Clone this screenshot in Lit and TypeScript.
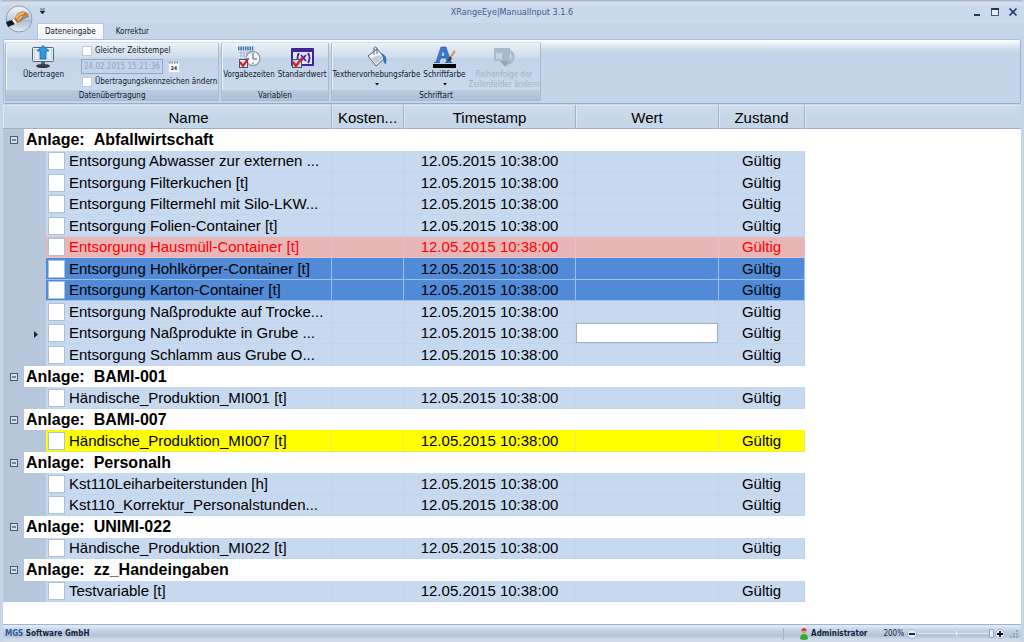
import { LitElement, html, css, nothing } from "lit";
import { customElement, state } from "lit/decorators.js";
import { classMap } from "lit/directives/class-map.js";

interface Item {
  name: string;
  tone?: "error" | "selected" | "marked";
  current?: boolean;
}
interface Group {
  title: string;
  items: Item[];
}

const STAMP = "12.05.2015 10:38:00";

const GROUPS: Group[] = [
  {
    title: "Abfallwirtschaft",
    items: [
      { name: "Entsorgung Abwasser zur externen ..." },
      { name: "Entsorgung Filterkuchen [t]" },
      { name: "Entsorgung Filtermehl mit Silo-LKW..." },
      { name: "Entsorgung Folien-Container [t]" },
      { name: "Entsorgung Hausmüll-Container [t]", tone: "error" },
      { name: "Entsorgung Hohlkörper-Container [t]", tone: "selected" },
      { name: "Entsorgung Karton-Container [t]", tone: "selected" },
      { name: "Entsorgung Naßprodukte auf Trocke..." },
      { name: "Entsorgung Naßprodukte in Grube ...", current: true },
      { name: "Entsorgung Schlamm aus Grube O..." },
    ],
  },
  { title: "BAMI-001", items: [{ name: "Händische_Produktion_MI001 [t]" }] },
  { title: "BAMI-007", items: [{ name: "Händische_Produktion_MI007 [t]", tone: "marked" }] },
  {
    title: "Personalh",
    items: [{ name: "Kst110Leiharbeiterstunden [h]" }, { name: "Kst110_Korrektur_Personalstunden..." }],
  },
  { title: "UNIMI-022", items: [{ name: "Händische_Produktion_MI022 [t]" }] },
  { title: "zz_Handeingaben", items: [{ name: "Testvariable [t]" }] },
];

const baseStyles = css`
  * {
    box-sizing: border-box;
  }
  button {
    margin: 0;
    padding: 0;
    border: 0;
    background: none;
    font: inherit;
    color: inherit;
  }
  input {
    margin: 0;
    font: inherit;
  }
  svg {
    display: block;
  }
`;

@customElement("app-titlebar")
class AppTitlebar extends LitElement {
  static styles = [
    baseStyles,
    css`
      :host {
        display: grid;
        grid-template-columns: 1fr auto 1fr;
        align-items: center;
        height: 23px;
        padding: 0 6px;
        color: #3d5c8c;
        font-size: 8px;
        border-radius: 4px 4px 0 0;
        background: linear-gradient(#9fabbb, #d3dfee 2px, #c9d9ec 8px, #cbdaec);
      }
      .quick {
        justify-self: start;
        align-self: start;
        padding: 8px 0 0 34px;
      }
      .title {
        margin: 0;
        font-size: 9px;
        font-weight: 400;
      }
      .buttons {
        justify-self: end;
        display: flex;
        gap: 8px;
      }
    `,
  ];

  render() {
    return html`
      <button class="quick" aria-label="Symbolleiste anpassen">
        <svg width="5" height="6" viewBox="0 0 5 6"><path d="M0 1h5M0 3h5L2.500 6z" stroke="#223" stroke-width=".6" fill="#223" /></svg>
      </button>
      <h1 class="title">XRangeEye|ManualInput 3.1.6</h1>
      <div class="buttons">
        <button aria-label="Minimieren">
          <svg width="10" height="10" viewBox="0 0 10 10"><path d="M2 8h6" stroke="#1a3765" stroke-width="2" /></svg>
        </button>
        <button aria-label="Maximieren">
          <svg width="10" height="10" viewBox="0 0 10 10">
            <rect x="1.500" y="1.500" width="7" height="7" fill="#e4edf8" stroke="#3c5884" />
            <path d="M1 2h8" stroke="#1a3765" stroke-width="2" />
          </svg>
        </button>
        <button aria-label="Schließen">
          <svg width="10" height="10" viewBox="0 0 10 10"><path d="M1.500 1.500l7 7M8.500 1.500l-7 7" stroke="#1a3765" stroke-width="1.700" /></svg>
        </button>
      </div>
    `;
  }
}

@customElement("app-ribbon")
class AppRibbon extends LitElement {
  static styles = [
    baseStyles,
    css`
      :host {
        display: block;
        font-size: 8px;
        line-height: 10px;
        color: #10161f;
      }
      .orb {
        position: absolute;
        left: 5px;
        top: 5px;
      }
      .tabs {
        display: flex;
        padding: 0 30px;
        height: 16px;
      }
      .tab {
        padding: 1px 8px 0;
        margin-left: 4px;
      }
      .tab.active {
        border: 1px solid #b3c6df;
        border-bottom: 0;
        border-radius: 2px 2px 0 0;
        padding: 0 7px;
        background: linear-gradient(#ffffff, #eef4fb);
      }
      .panel {
        display: flex;
        gap: 2px;
        padding: 2px 1px;
        height: 65px;
        border: 1px solid #adbfd6;
        border-right-color: #9fb2ca;
        border-bottom-color: #9aabbf;
        border-radius: 2px;
        background: linear-gradient(#ffffff, #dbe7f2 6px, #c3d5e8 13px, #c3d5e8);
      }
      .group {
        display: flex;
        flex-direction: column;
        border: 1px solid #a9bbd2;
        border-top-color: #d3deeb;
        border-radius: 2px;
        box-shadow: inset 1px 1px 0 #eef4fa;
        background: linear-gradient(#e9f0f8, #cfddec 14px, #c2d3e8 16px, #ccdcee);
      }
      .content {
        flex: 1;
        display: flex;
        align-items: flex-start;
        padding: 1px 1px 0;
      }
      .caption {
        flex: none;
        height: 10px;
        line-height: 12px;
        text-align: center;
        background: linear-gradient(#b9cadf, #adc0d8);
      }
      .tool {
        display: flex;
        flex-direction: column;
        align-items: center;
        white-space: nowrap;
      }
      .tool:disabled {
        color: #a2b1c5;
      }
      .transfer {
        padding: 0 17px 0 16px;
      }
      .pair {
        gap: 3px;
      }
      .options {
        display: grid;
        grid-template-rows: 13px 18px 13px;
        align-items: center;
      }
      .option {
        display: flex;
        align-items: center;
        gap: 3px;
        white-space: nowrap;
        padding-left: 1px;
      }
      .tick {
        appearance: none;
        width: 10px;
        height: 10px;
        background: #fff;
        border: 1px solid #b9c9df;
      }
      .stamp {
        display: flex;
        align-items: center;
        gap: 5px;
      }
      .date {
        width: 82px;
        height: 15px;
        padding: 0 2px;
        border: 1px solid #8fa9cd;
        background: #c3d4e9;
        color: #93a1b4;
      }
    `,
  ];

  render() {
    return html`
      <button class="orb" aria-label="Anwendungsmenü">
        <svg width="28" height="28" viewBox="0 0 28 28">
          <defs>
            <linearGradient id="orb" x1="0" y1="0" x2="0" y2="1">
              <stop offset="0" stop-color="#f4f7fb" />
              <stop offset=".5" stop-color="#c2cfdf" />
              <stop offset=".55" stop-color="#a9bbd1" />
              <stop offset="1" stop-color="#e6eef7" />
            </linearGradient>
          </defs>
          <circle cx="14" cy="14" r="13" fill="url(#orb)" stroke="#8d9db3" />
          <path d="M1 17l6-2 3 4-7 3z" fill="#151a22" />
          <path d="M7 15l2-1 3 4-2 1z" fill="#fff" />
          <path d="M9 14l4-6 5-2 6 3-2 2-3 1-2 4-5 2z" fill="#c47c38" />
          <path d="M11 13l4-4 4-1M13 15l4-4" stroke="#f2c48e" stroke-width="1.500" fill="none" />
          <path d="M17 14l7-3" stroke="#7c848f" stroke-width="1.800" />
        </svg>
      </button>

      <div class="tabs" role="tablist">
        <button class="tab active" role="tab" aria-selected="true">Dateneingabe</button>
        <button class="tab" role="tab" aria-selected="false">Korrektur</button>
      </div>

      <div class="panel">
        <section class="group">
          <div class="content">
            <button class="tool transfer">
              <svg width="24" height="26" viewBox="0 0 24 26">
                <rect x="1.500" y="3.500" width="21" height="14" rx="1" fill="#e9eef3" stroke="#59636e" />
                <rect x="3.500" y="5.500" width="17" height="10" fill="#dff0fb" stroke="#b4c0ca" stroke-width=".6" />
                <path d="M10 18h4v3h-4z" fill="#59636e" />
                <ellipse cx="12" cy="22" rx="7" ry="2" fill="#343b43" />
                <path d="M12 1.500L18 7h-3v8H9V7H6z" fill="#2f9ae2" stroke="#1466ad" stroke-width=".8" />
              </svg>
              Übertragen
            </button>
            <div class="options">
              <label class="option"><input class="tick" type="checkbox" />Gleicher Zeitstempel</label>
              <div class="stamp">
                <input class="date" type="text" aria-label="Zeitstempel" value="24.02.2015 15:21:36" disabled />
                <button aria-label="Kalender">
                  <svg width="12" height="14" viewBox="0 0 12 14">
                    <rect x=".5" y="2.500" width="11" height="11" rx="1" fill="#f5f7fa" stroke="#d0d7e0" />
                    <path d="M1 3.500h10" stroke="#7c8692" stroke-width="2" stroke-dasharray="1.500 1" />
                    <text x="6" y="11" font-size="5" font-weight="700" text-anchor="middle" fill="#222">24</text>
                  </svg>
                </button>
              </div>
              <label class="option"><input class="tick" type="checkbox" />Übertragungskennzeichen ändern</label>
            </div>
          </div>
          <div class="caption">Datenübertragung</div>
        </section>

        <section class="group">
          <div class="content pair">
            <button class="tool">
              <svg width="25" height="26" viewBox="0 0 25 26">
                <rect x="2" y="3" width="16" height="18" fill="#e8eef7" />
                <path d="M2 4.500h16" stroke="#3f6db2" stroke-width="4" stroke-dasharray="1.500 .8" />
                <path d="M2 9h16M2 12h16M2 15h16M2 18h16M5 7v14M8 7v14M11 7v14M14 7v14" stroke="#8fa4c2" stroke-width=".7" />
                <circle cx="17" cy="14.500" r="7" fill="#f3f6f9" stroke="#8c98a5" stroke-width="1.300" />
                <path d="M17 9v6h4M17 20v-1.500M11.500 14.500H13" stroke="#4d5a68" fill="none" />
                <rect x="3.500" y="15.500" width="8" height="8" fill="#e9f0f8" stroke="#34557f" />
                <path d="M4 18l3 4 5-7" stroke="#e01e22" stroke-width="2.200" fill="none" />
              </svg>
              Vorgabezeiten
            </button>
            <button class="tool">
              <svg width="25" height="26" viewBox="0 0 25 26">
                <rect x="1" y="4" width="23" height="18" rx="1" fill="#3f2496" />
                <rect x="3" y="8" width="19" height="12" fill="#e6e3f4" />
                <path d="M9 9q-3 5 0 10M18 9q3 5 0 10M11 11l5 6M16 11l-5 6" stroke="#3f2496" stroke-width="1.800" fill="none" />
                <rect x="2.500" y="15.500" width="9" height="8" fill="#c9d6e8" stroke="#34557f" />
                <path d="M3 18l3 4 6-8" stroke="#e01e22" stroke-width="2.300" fill="none" />
              </svg>
              Standardwert
            </button>
          </div>
          <div class="caption">Variablen</div>
        </section>

        <section class="group">
          <div class="content pair">
            <button class="tool">
              <svg width="25" height="26" viewBox="0 0 25 26">
                <path d="M4 12l9-7 8 9-9 8z" fill="#f4f6f9" stroke="#59636e" />
                <path d="M7 14l5 6 7-6-3-3z" fill="#c3cbd5" />
                <path d="M10 11V4q1-2 3 0v6" fill="none" stroke="#59636e" />
                <path d="M17 9q7 2 5 11-2.500 0-3-6z" fill="#3d6fc4" />
              </svg>
              Texthervorhebungsfarbe
              <svg width="5" height="8" viewBox="0 0 5 8"><path d="M1 3h4L3 5.500z" fill="#111" /></svg>
            </button>
            <button class="tool">
              <svg width="25" height="26" viewBox="0 0 25 26">
                <path d="M9 3h5l5 15h-4l-1-4H9l-2 4H4zM11 6l-2 6h4z" fill="#3a76d0" stroke="#2457a8" stroke-width=".6" fill-rule="evenodd" />
                <path d="M2 18.500h6M13 18.500h7" stroke="#2f66c2" />
                <path d="M23 7l-5 7" stroke="#c7a061" stroke-width="2.200" />
                <path d="M18 12l-4 7 6-4z" fill="#3a3f47" />
                <path d="M1 20h23v4H1z" fill="#000" />
              </svg>
              Schriftfarbe
              <svg width="5" height="8" viewBox="0 0 5 8"><path d="M1 3h4L3 5.500z" fill="#111" /></svg>
            </button>
            <button class="tool" disabled>
              <svg width="25" height="26" viewBox="0 0 25 26">
                <path d="M3 4h16v13H3z" fill="#a9b9ce" />
                <path d="M5 9h6v6H5z" fill="#c6d4e6" />
                <path d="M15 7q8 0 7 7-1 5-7 6" stroke="#a9b9ce" stroke-width="3" fill="none" />
                <path d="M9 17h9l-4 6z" fill="#94a6be" />
              </svg>
              Reihenfolge der<br />Zeilenfelder ändern
            </button>
          </div>
          <div class="caption">Schriftart</div>
        </section>
      </div>
    `;
  }
}

@customElement("app-grid")
class AppGrid extends LitElement {
  @state() private closed: string[] = [];

  static styles = [
    baseStyles,
    css`
      :host {
        display: block;
        flex: 1;
        background: #fff;
        font-family: "Liberation Sans", Arial, sans-serif;
        font-size: 15px;
        line-height: 20px;
        color: #000;
      }
      .grid {
        width: 100%;
        table-layout: fixed;
        border-collapse: separate;
        border-spacing: 0;
      }
      .c-fold {
        width: 21px;
      }
      .c-mark {
        width: 22px;
      }
      .c-name {
        width: 286px;
      }
      .c-cost {
        width: 72px;
      }
      .c-time {
        width: 172px;
      }
      .c-value {
        width: 143px;
      }
      .c-state {
        width: 86px;
      }
      th,
      td {
        padding: 0;
        white-space: nowrap;
        overflow: hidden;
      }
      .head th {
        height: 24px;
        padding-top: 2px;
        font-weight: 400;
        background: linear-gradient(#cddbeb, #c3d5e8);
        border-right: 1px solid #a1b1c8;
        border-bottom: 1px solid #a0aec4;
        box-shadow: inset 1px 1px 0 #dfe9f4;
      }
      .head th:first-child {
        padding-left: 43px;
      }
      .head th:last-child {
        border-right: 0;
      }
      .line td,
      .line th {
        height: 21px;
      }
      .line:nth-child(odd) td,
      .line:nth-child(odd) th {
        height: 22px;
      }
      .line .gutter {
        background: #b7c7db;
      }
      .fold {
        display: flex;
        margin-left: 7px;
      }
      .grouptitle {
        text-align: left;
        padding-left: 2px;
        font-size: 16px;
      }
      .grouptitle b {
        margin-left: 9px;
      }
      .cell {
        background: #c7d9ef;
        border-right: 1px solid #c1d4ec;
        border-bottom: 1px solid #c1d4ec;
        text-align: center;
      }
      .name {
        text-align: left;
      }
      .label {
        display: flex;
        align-items: center;
        gap: 4px;
        padding-left: 2px;
      }
      .tick {
        appearance: none;
        flex: none;
        width: 17px;
        height: 18px;
        background: #fff;
        border: 1px solid #afbfd8;
      }
      .error .cell {
        background: #e8b6b6;
        border-color: #e2c3c8;
        color: #f00;
      }
      .selected .cell {
        background: #518ad6;
        border-color: #9dbfe9;
      }
      .marked .cell {
        background: #ff0;
        border-color: #e6ea5c;
      }
      .entry {
        display: block;
        width: 100%;
        height: 20px;
        border: 1px solid #a0aec8;
        background: #fff;
      }
    `,
  ];

  private toggle(title: string) {
    this.closed = this.closed.includes(title) ? this.closed.filter((t) => t !== title) : [...this.closed, title];
  }

  private renderItem(item: Item) {
    return html`
      <tr class=${classMap({ line: true, [item.tone ?? "plain"]: true })}>
        <td class="gutter"></td>
        <td class="gutter">
          ${item.current
            ? html`<svg width="22" height="10" viewBox="0 0 22 10"><path d="M10 2l4 3.500-4 3.500z" fill="#1b2433" /></svg>`
            : nothing}
        </td>
        <td class="cell name">
          <label class="label"><input class="tick" type="checkbox" />${item.name}</label>
        </td>
        <td class="cell"></td>
        <td class="cell">${STAMP}</td>
        <td class="cell">${item.current ? html`<input class="entry" type="text" aria-label="Wert" />` : nothing}</td>
        <td class="cell">Gültig</td>
        <td></td>
      </tr>
    `;
  }

  private renderGroup(group: Group) {
    const open = !this.closed.includes(group.title);
    return html`
      <tr class="line">
        <td class="gutter">
          <button class="fold" aria-label=${group.title} aria-expanded=${open} @click=${() => this.toggle(group.title)}>
            <svg width="8" height="8" viewBox="0 0 8 8">
              <rect x=".5" y=".5" width="7" height="7" fill="#d3dfee" stroke="#4a5a72" />
              <path d=${open ? "M2 4h4" : "M2 4h4M4 2v4"} stroke="#222e42" />
            </svg>
          </button>
        </td>
        <th class="grouptitle" colspan="7" scope="rowgroup">Anlage:<b>${group.title}</b></th>
      </tr>
      ${open ? group.items.map((item) => this.renderItem(item)) : nothing}
    `;
  }

  render() {
    return html`
      <table class="grid">
        <colgroup>
          <col class="c-fold" /><col class="c-mark" /><col class="c-name" /><col class="c-cost" />
          <col class="c-time" /><col class="c-value" /><col class="c-state" /><col />
        </colgroup>
        <thead>
          <tr class="head">
            <th colspan="3">Name</th>
            <th>Kosten...</th>
            <th>Timestamp</th>
            <th>Wert</th>
            <th>Zustand</th>
            <th></th>
          </tr>
        </thead>
        <tbody>
          ${GROUPS.map((group) => this.renderGroup(group))}
        </tbody>
      </table>
    `;
  }
}

@customElement("app-status")
class AppStatus extends LitElement {
  static styles = [
    baseStyles,
    css`
      :host {
        display: flex;
        align-items: center;
        height: 17px;
        padding: 0 2px;
        border-top: 1px solid #9fb4cf;
        font-size: 8px;
        line-height: 10px;
        color: #15233d;
        background: linear-gradient(#e3edf8, #c5d5e8 5px, #b0c3da 11px, #d0dbe8 14px);
      }
      .company {
        flex: 1;
      }
      .company span {
        color: #2c5a9c;
      }
      .user {
        display: flex;
        align-items: center;
        gap: 3px;
        padding: 0 16px;
        border-left: 1px solid #a3b5cc;
      }
      .zoom {
        display: flex;
        align-items: center;
        gap: 1px;
      }
      .level {
        margin-right: 2px;
      }
      .range {
        appearance: none;
        width: 76px;
        height: 10px;
        background: linear-gradient(#e6eef7, #e6eef7) center / 1px 5px no-repeat,
          linear-gradient(#dfe8f2, #dfe8f2) center / 100% 1px no-repeat;
      }
      .range::-webkit-slider-thumb {
        appearance: none;
        width: 5px;
        height: 9px;
        border: 1px solid #8fa3bd;
        border-radius: 1px;
        background: #e8eff7;
      }
      .grip {
        margin-left: 4px;
      }
    `,
  ];

  render() {
    return html`
      <b class="company"><span>MGS</span> Software GmbH</b>
      <div class="user">
        <svg width="8" height="12" viewBox="0 0 8 12">
          <circle cx="4" cy="3" r="2.500" fill="#e2a05c" />
          <path d="M1.500 3Q1 .5 4 .3 7 .5 6.500 2.500z" fill="#c4392b" />
          <path d="M0 11q0-5 4-5t4 5q-4 2-8 0z" fill="#37a935" />
        </svg>
        <b>Administrator</b>
      </div>
      <div class="zoom">
        <span class="level">200%</span>
        <button aria-label="Verkleinern">
          <svg width="10" height="10" viewBox="0 0 10 10"><circle cx="5" cy="5" r="4.500" fill="#e6eef7" stroke="#a3b4ca" /><path d="M2 5h6" stroke="#111" stroke-width="1.800" /></svg>
        </button>
        <input class="range" type="range" min="0" max="200" value="200" aria-label="Zoom" />
        <button aria-label="Vergrößern">
          <svg width="10" height="10" viewBox="0 0 10 10"><circle cx="5" cy="5" r="4.500" fill="#e6eef7" stroke="#a3b4ca" /><path d="M2 5h6M5 2v6" stroke="#111" stroke-width="1.800" /></svg>
        </button>
      </div>
      <svg class="grip" width="10" height="10" viewBox="0 0 10 10"><path d="M7 1h2v2H7zM4 4h2v2H4zM7 4h2v2H7zM1 7h2v2H1zM4 7h2v2H4zM7 7h2v2H7z" fill="#8fa5c2" /></svg>
    `;
  }
}

@customElement("app-root")
class AppRoot extends LitElement {
  static styles = css`
    :host {
      display: flex;
      flex-direction: column;
      box-sizing: border-box;
      min-height: 100vh;
      position: relative;
      background: #c5d6ea;
      font-family: "DejaVu Sans Condensed", Tahoma, sans-serif;
    }
    .body {
      flex: 1;
      display: flex;
      flex-direction: column;
      margin: 0 3px;
    }
    .ribbon {
      margin-bottom: 1px;
    }
  `;

  render() {
    return html`
      <app-titlebar></app-titlebar>
      <div class="body">
        <app-ribbon class="ribbon"></app-ribbon>
        <app-grid></app-grid>
        <app-status></app-status>
      </div>
    `;
  }
}
